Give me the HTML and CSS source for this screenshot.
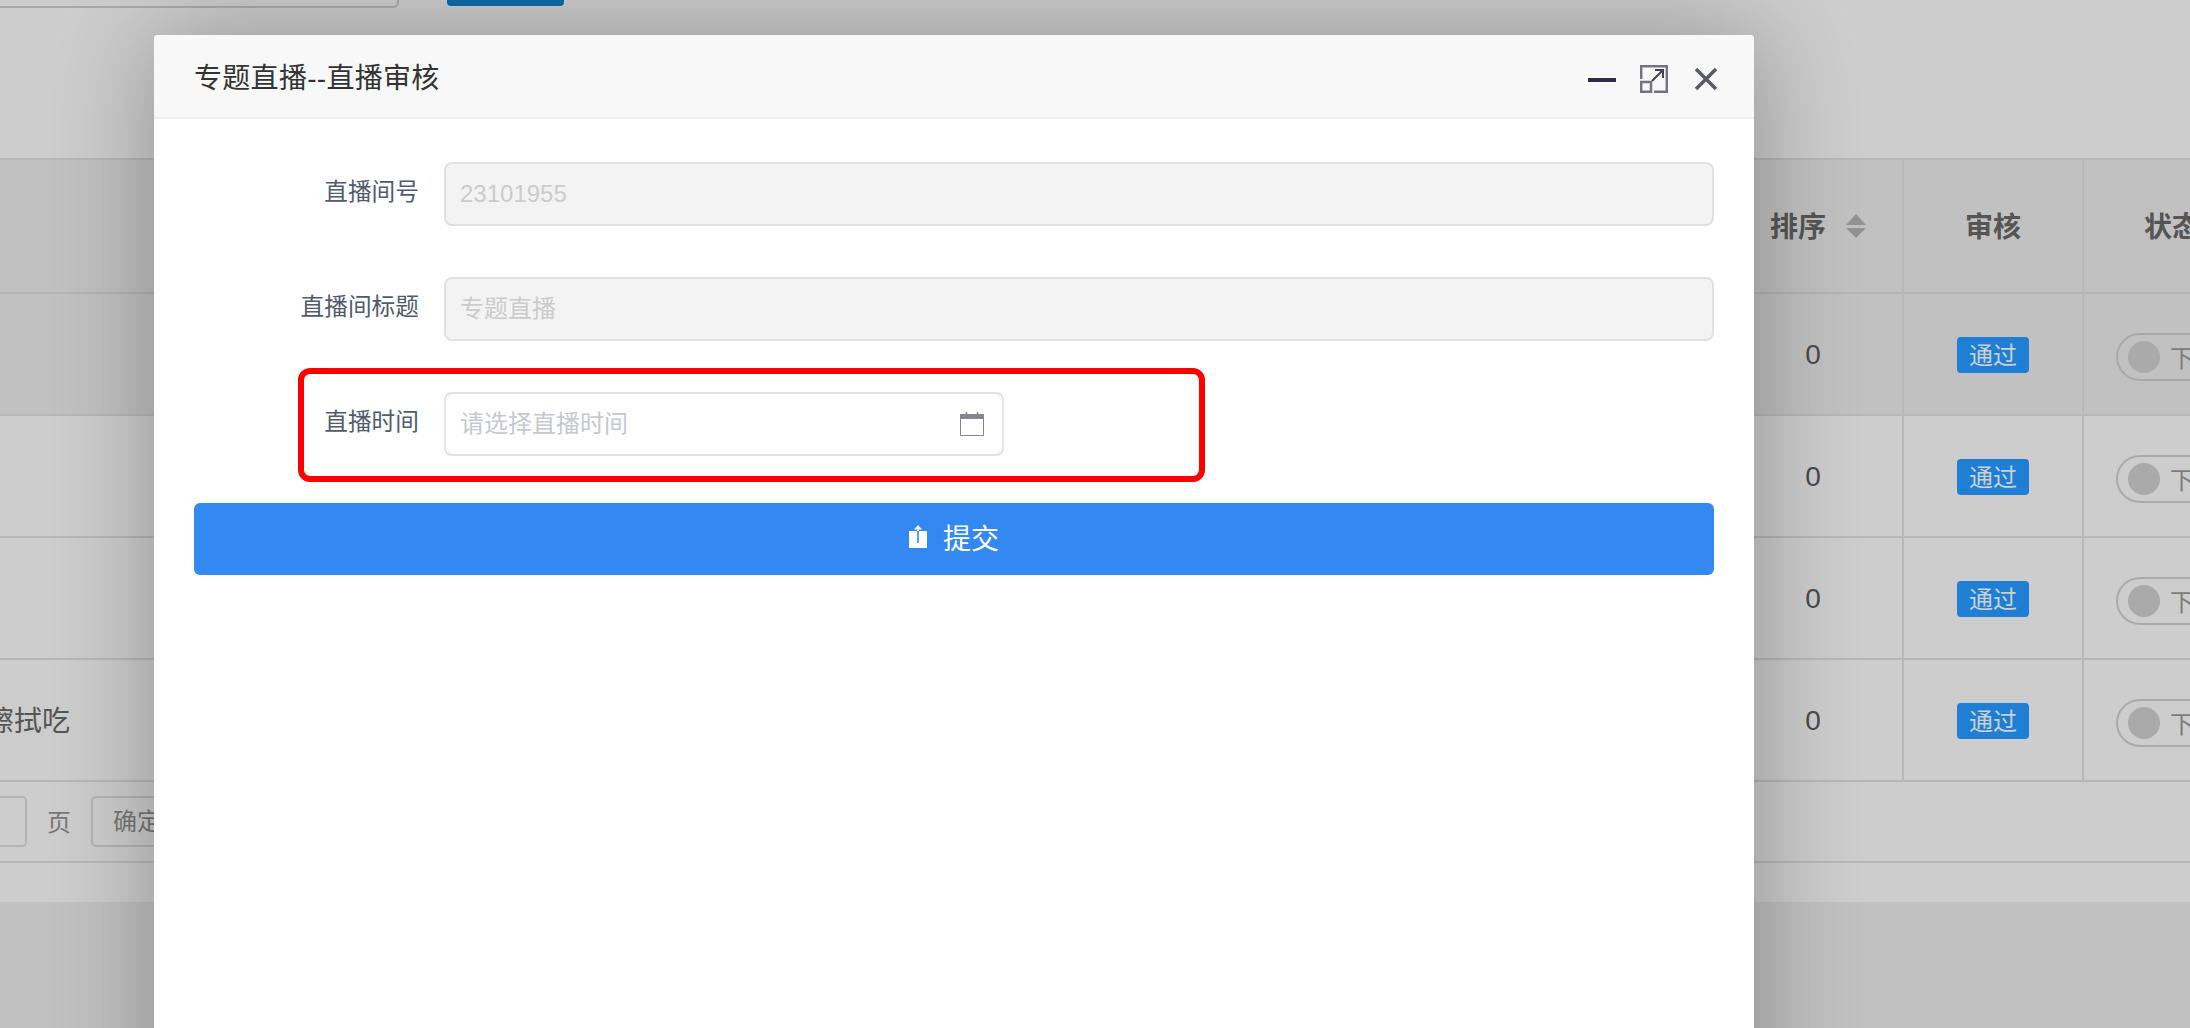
FILE: index.html
```html
<!DOCTYPE html>
<html lang="zh-CN">
<head>
<meta charset="utf-8">
<title>专题直播--直播审核</title>
<link rel="stylesheet" href="styles.css">
</head>
<body>
<div class="page">
  <div class="panel">
    <div class="toolbar">
      <div class="search-box"></div>
      <div class="search-btn"></div>
    </div>
    <div class="table">
      <div class="cell head name"></div>
      <div class="cell head sort"><b>排序</b>
        <svg class="sort-icon" viewBox="0 0 20 24" aria-hidden="true"><path d="M10 0L20 11H0Z"/><path d="M0 14H20L10 24Z"/></svg>
      </div>
      <div class="cell head"><b>审核</b></div>
      <div class="cell head status"><b>状态</b></div>

      <div class="cell dark name"></div>
      <div class="cell dark num">0</div>
      <div class="cell dark"><span class="tag">通过</span></div>
      <div class="cell dark status"><span class="switch"><i></i>下</span></div>

      <div class="cell name"></div>
      <div class="cell num">0</div>
      <div class="cell"><span class="tag">通过</span></div>
      <div class="cell status"><span class="switch"><i></i>下</span></div>

      <div class="cell name"></div>
      <div class="cell num">0</div>
      <div class="cell"><span class="tag">通过</span></div>
      <div class="cell status"><span class="switch"><i></i>下</span></div>

      <div class="cell name title-text">擦拭吃</div>
      <div class="cell num">0</div>
      <div class="cell"><span class="tag">通过</span></div>
      <div class="cell status"><span class="switch"><i></i>下</span></div>
    </div>
    <div class="pager">
      <div class="pager-input"></div>
      <span class="pager-label">页</span>
      <div class="pager-btn">确定</div>
    </div>
    <div class="panel-foot"></div>
  </div>
</div>

<div class="modal">
  <div class="modal-head">
    <h1 class="modal-title">专题直播--直播审核</h1>
    <div class="modal-tools">
      <svg class="tool-min" viewBox="0 0 28 4" aria-hidden="true"><rect width="28" height="4"/></svg>
      <svg class="tool-max" viewBox="0 0 28 28" aria-hidden="true"><path class="frame" d="M1.200 14V1.200H26.800V26.800H14"/><rect class="frame" x="1.200" y="17" width="9.800" height="9.800"/><path class="arrow" d="M12 16L23 5M15 5H23V13"/></svg>
      <svg class="tool-close" viewBox="0 0 24 24" aria-hidden="true"><path d="M2 2L22 22M22 2L2 22"/></svg>
    </div>
  </div>
  <form class="modal-body">
    <div class="form-row">
      <label class="form-label">直播间号</label>
      <input class="field" type="text" value="23101955" disabled>
    </div>
    <div class="form-row">
      <label class="form-label">直播间标题</label>
      <input class="field field-cjk" type="text" value="专题直播" disabled>
    </div>
    <div class="form-row time-row">
      <label class="form-label">直播时间</label>
      <div class="date-wrap">
        <input class="field date" type="text" placeholder="请选择直播时间">
        <svg class="date-icon" viewBox="0 0 24 24" aria-hidden="true"><path class="cal-fill" d="M0 2H24V7H0Z"/><path class="cal-line" d="M.5 2V23.500H23.500V2"/><path class="cal-tick" d="M6.500 0V4M17.500 0V4"/></svg>
      </div>
      <div class="highlight"></div>
    </div>
    <button class="submit" type="button">
      <svg class="submit-icon" viewBox="0 0 18 23" aria-hidden="true"><path d="M0 6H8.200V18H9.800V6H18V23H0Z"/><path d="M9 0L13 4.500H9.800V6H8.200V4.500H5Z"/></svg>
      <span class="submit-text">提交</span>
    </button>
  </form>
</div>
</body>
</html>
```
FILE: styles.css
```css
* { box-sizing: border-box; }
html, body { margin: 0; height: 100%; overflow: hidden; }
body {
  width: 2190px;
  height: 1028px;
  position: relative;
  background: #c1c1c1;
  font-family: "Liberation Sans", "Noto Sans CJK SC", sans-serif;
  color: #4c4c4c;
}

/* dimmed page behind the dialog */
.page { width: 2190px; height: 1028px; overflow: hidden; }
.panel { width: 2400px; height: 902px; margin-left: -33px; background: #cdcdcd; }
.toolbar { height: 158px; display: flex; align-items: flex-start; overflow: hidden; }
.search-box {
  width: 432px; height: 60px; margin: -52px 0 0 0;
  border: 2px solid #aaa; border-radius: 6px;
}
.search-btn {
  width: 117px; height: 40px; margin: -34px 0 0 48px;
  background: #0e6ca8; border-radius: 4px;
}
.table {
  display: grid;
  grid-template-columns: 1757px 180px 180px 283px;
  grid-template-rows: 134px repeat(4, 122px);
  border-top: 2px solid #b8b8b8;
}
.cell {
  display: flex; align-items: center; justify-content: center;
  border-bottom: 2px solid #b8b8b8;
  border-right: 2px solid #b8b8b8;
  font-size: 28px;
  min-width: 0;
}
.cell.name { border-right: 0; }
.cell.head, .cell.dark { background: #c1c1c1; }
.cell.head { border-bottom-color: #b4b4b4; }
.cell.head b { font-weight: 700; font-size: 28px; color: #555; margin-top: -2px; }
.cell.status { justify-content: flex-start; padding-left: 32px; }
.cell.head.status { padding-left: 60px; }
.cell.sort { gap: 20px; padding-left: 10px; }
.sort-icon { width: 20px; height: 24px; fill: #939393; }
.cell.num { color: #4c4c4c; padding-top: 1px; }
.title-text { justify-content: flex-start; padding-left: 19px; padding-bottom: 2px; color: #555; }
.tag {
  display: inline-block; width: 72px; height: 36px; line-height: 37px;
  text-align: center; font-size: 24px; background: #1e7fd4;
  color: #cfcfcf; border-radius: 4px;
  margin: 2px 0 0 0;
}
.switch {
  display: flex; align-items: center; gap: 10px;
  width: 120px; height: 48px; padding-left: 10px;
  border: 2px solid #aaa; border-radius: 24px;
  color: #7c7c7c; font-size: 24px;
  margin-top: 5px;
}
.switch i { width: 32px; height: 32px; border-radius: 50%; background: #aaa; flex: none; }
.pager { height: 81px; display: flex; align-items: center; border-bottom: 2px solid #b8b8b8; }
.pager-input {
  width: 100px; height: 51px; margin-left: -40px;
  border: 2px solid #b4b4b4; border-radius: 5px;
}
.pager-label { margin-left: 20px; margin-top: -2px; font-size: 24px; color: #777; }
.pager-btn {
  margin-left: 20px; width: 120px; height: 51px; padding-left: 20px; line-height: 47px;
  border: 2px solid #b4b4b4; border-radius: 5px; font-size: 24px; color: #777;
}

/* dialog */
.modal {
  position: absolute; left: 154px; top: 35px; width: 1600px; height: 1100px;
  background: #fff; border-radius: 4px 4px 0 0;
  box-shadow: 2px 2px 100px rgba(0, 0, 0, .3);
}
.modal-head {
  height: 84px; padding: 5px 36px 0 40px;
  display: flex; align-items: center; justify-content: space-between;
  background: #f8f8f8; border-bottom: 2px solid #eee;
  border-radius: 4px 4px 0 0;
}
.modal-title { margin: 0; font-size: 28px; font-weight: 400; color: #333; line-height: 40px; letter-spacing: .3px; }
.modal-tools { display: flex; align-items: center; gap: 24px; }
.tool-min { width: 28px; height: 4px; fill: #2f2d45; margin-top: 3px; }
.tool-max { width: 28px; height: 28px; fill: none; }
.tool-max .frame { stroke: #74747e; stroke-width: 2.500; fill: none; }
.tool-max .arrow { stroke: #44444e; stroke-width: 2; fill: none; }
.tool-close { width: 24px; height: 24px; fill: none; stroke: #5a5a66; stroke-width: 3.500; margin-left: 2px; }
.modal-body { padding: 43px 40px 0; }
.form-row {
  display: grid; grid-template-columns: 225px 1fr; column-gap: 25px;
  align-items: center; margin-bottom: 51px; position: relative;
}
.form-label { text-align: right; font-size: 23.700px; color: #515a6e; margin-top: -8px; }
.field {
  display: block; width: 100%; height: 64px; padding: 0 12px 0 14px;
  border: 2px solid #e0e0e6; border-radius: 8px; outline: 0;
  font: 24px "Liberation Sans", "Noto Sans CJK SC", sans-serif;
  background: #fff; color: #515a6e;
}
.field-cjk { padding-bottom: 5px; }
.field:disabled { background: #f3f3f3; color: #ccc; -webkit-text-fill-color: #ccc; opacity: 1; }
.field::placeholder { color: #c5c8ce; opacity: 1; }
.date-wrap { position: relative; width: 560px; }
.date-icon { position: absolute; right: 20px; top: 20px; width: 24px; height: 24px; fill: none; }
.cal-fill { fill: #85858f; }
.cal-line { stroke: #85858f; stroke-width: 1; }
.cal-tick { stroke: #85858f; stroke-width: 1.500; }
.time-row { margin-bottom: 47px; }
.highlight {
  position: absolute; left: 104px; top: -24px; width: 907px; height: 114px;
  border: 6px solid #f00; border-radius: 12px; pointer-events: none;
}
.submit {
  display: flex; align-items: center; justify-content: center; gap: 16px;
  width: 100%; height: 72px; padding: 0;
  background: #3388f2; color: #fff; border: 0; border-radius: 6px;
  font: 28px "Liberation Sans", "Noto Sans CJK SC", sans-serif;
}
.submit-text { margin-top: -4px; }
.submit-icon { width: 18px; height: 23px; fill: #fff; margin-top: -5px; }
```
